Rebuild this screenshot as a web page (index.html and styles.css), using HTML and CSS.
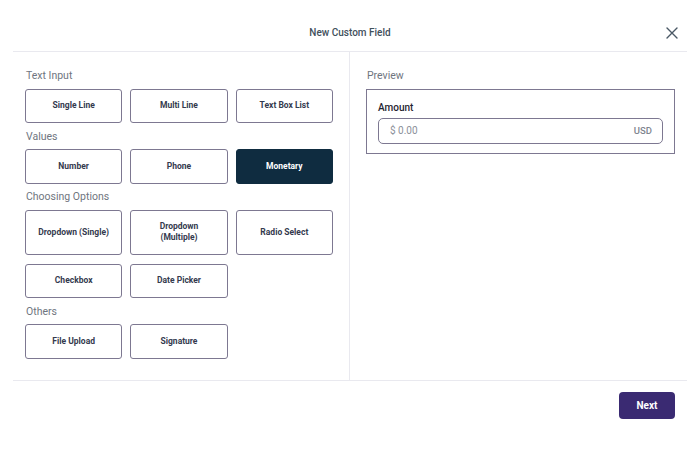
FILE: index.html
```html
<!DOCTYPE html>
<html>
<head>
<meta charset="utf-8">
<link rel="stylesheet" href="styles.css">
</head>
<body>
<div class="modal">
  <header class="modal-header">
    <h1 class="title">New Custom Field</h1>
    <button class="close" aria-label="Close">
      <svg width="12" height="12" viewBox="0 0 12 12"><path d="M1 1L11 11M11 1L1 11" stroke="#4a5865" stroke-width="1.4" fill="none" stroke-linecap="round"/></svg>
    </button>
  </header>
  <div class="modal-body">
    <section class="types">
      <div class="group-label">Text Input</div>
      <div class="grid">
        <button class="opt">Single Line</button>
        <button class="opt">Multi Line</button>
        <button class="opt">Text Box List</button>
      </div>
      <div class="group-label">Values</div>
      <div class="grid">
        <button class="opt">Number</button>
        <button class="opt">Phone</button>
        <button class="opt active">Monetary</button>
      </div>
      <div class="group-label">Choosing Options</div>
      <div class="grid">
        <button class="opt tall">Dropdown (Single)</button>
        <button class="opt tall">Dropdown<br>(Multiple)</button>
        <button class="opt tall">Radio Select</button>
        <button class="opt">Checkbox</button>
        <button class="opt">Date Picker</button>
      </div>
      <div class="group-label">Others</div>
      <div class="grid">
        <button class="opt">File Upload</button>
        <button class="opt">Signature</button>
      </div>
    </section>
    <section class="preview">
      <div class="group-label">Preview</div>
      <div class="preview-box">
        <div class="field-label">Amount</div>
        <div class="money-input">
          <span class="ph">$ 0.00</span>
          <span class="cur">USD</span>
        </div>
      </div>
    </section>
  </div>
  <footer class="modal-footer">
    <button class="next">Next</button>
  </footer>
</div>
</body>
</html>
```
FILE: styles.css
```css
* { box-sizing: border-box; }
html, body { margin: 0; padding: 0; background: #ffffff; }
body { font-family: Roboto, "Liberation Sans", Arial, sans-serif; color: #2d3348; }
.modal { padding: 0 13px; }
.modal-header {
  height: 52px;
  border-bottom: 1px solid #e9e9ef;
  display: flex;
  align-items: center;
  justify-content: center;
  position: relative;
}
.title {
  margin: 0;
  padding-top: 14px;
  font-size: 10px;
  font-weight: 500;
  color: #42505c;
}
.close {
  position: absolute;
  right: 9px;
  top: 27px;
  border: 0;
  background: none;
  padding: 0;
  width: 12px;
  height: 12px;
  display: flex;
}
.modal-body {
  display: flex;
  border-bottom: 1px solid #e9e9ef;
  height: 329px;
}
.types {
  width: 337px;
  border-right: 1px solid #e9e9ef;
  padding: 17px 16px 0 12px;
}
.group-label {
  font-size: 10.5px;
  line-height: 13px;
  color: #6f7580;
  margin: 6.6px 0 6.7px 1px;
}
.types .group-label:first-child, .preview .group-label { margin-top: 0; }
.grid {
  display: grid;
  grid-template-columns: repeat(3, 1fr);
  gap: 9px 8px;
}
.opt {
  height: 34.3px;
  border: 1.3px solid #7d7891;
  border-radius: 3px;
  background: #fff;
  font-family: inherit;
  font-size: 8.5px;
  font-weight: 700;
  color: #343a4e;
  line-height: 11px;
  padding: 0 4px;
}
.opt.tall { height: 45px; }
.opt.active {
  background: #0f2c40;
  border-color: #0f2c40;
  color: #ffffff;
}
.preview {
  flex: 1;
  padding: 17px 12px 0 16px;
}
.preview-box {
  border: 1px solid #7d7891;
  padding: 12px 11px 9px 11px;
}
.field-label {
  font-size: 10px;
  font-weight: 500;
  color: #1f2430;
  line-height: 12px;
  margin-bottom: 4px;
}
.money-input {
  height: 26px;
  border: 1px solid #7d7891;
  border-radius: 5px;
  display: flex;
  align-items: center;
  justify-content: space-between;
  padding: 0 10px 0 11px;
}
.ph { font-size: 10px; color: #8b909a; }
.cur { font-size: 9.5px; font-weight: 500; color: #80858f; }
.modal-footer {
  display: flex;
  justify-content: flex-end;
  padding: 11px 12px 0 0;
}
.next {
  width: 56px;
  height: 27px;
  border: 0;
  border-radius: 4px;
  background: #3a2a72;
  color: #ffffff;
  font-family: inherit;
  font-size: 10px;
  font-weight: 700;
}
```
